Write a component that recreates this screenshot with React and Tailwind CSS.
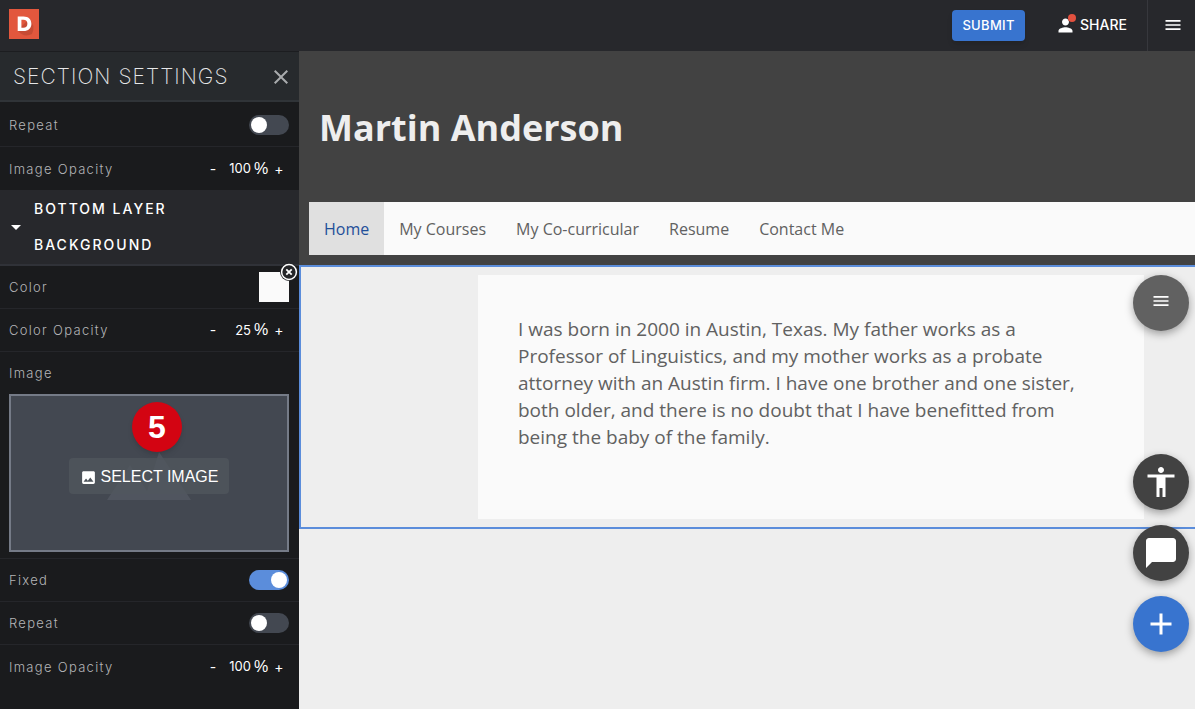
import React from "react";
import {
  MdAccessibility,
  MdAdd,
  MdArrowDropDown,
  MdChatBubble,
  MdClose,
  MdImage,
  MdMenu,
  MdPerson,
} from "react-icons/md";

function TopBar() {
  return (
    <header className="flex h-[51px] items-center bg-[#27282c] text-white">
      <a
        href="#home"
        aria-label="Dashboard"
        className="ml-[9px] mt-[9px] h-[30px] w-[30px] self-start bg-[#e2573d]"
      >
        <svg viewBox="0 0 30 30" className="h-full w-full" aria-hidden="true">
          <path d="M9 21 L20 10 Q27 16 23 25 Q15 29 9 22Z" fill="#b9452f" opacity=".65" />
          <path
            fillRule="evenodd"
            fill="#fff"
            d="M8.700 7.500h5.800c4.900 0 7.900 2.800 7.900 7.200s-3 7.300-7.900 7.300H8.700zM12.400 10.800v7.900h2c2.500 0 4-1.500 4-4s-1.500-3.900-4-3.900z"
          />
        </svg>
      </a>
      <button className="ml-auto mr-[30px] h-[31px] w-[73px] rounded-sm bg-[#3874cf] text-[13px] font-medium tracking-wide shadow-md">
        SUBMIT
      </button>
      <button className="mr-5 flex items-center gap-1 pb-px text-sm font-medium">
        <span className="relative">
          <MdPerson size={21} aria-hidden="true" />
          <span className="absolute -top-px right-0 h-2 w-2 rounded-full bg-[#e2513f]" />
        </span>
        SHARE
      </button>
      <button
        aria-label="Menu"
        className="flex h-full w-12 items-center justify-center border-l border-[#37383d] pb-px pl-[3px]"
      >
        <MdMenu size={20} />
      </button>
    </header>
  );
}

const rowStyle =
  "flex h-[43px] items-center justify-between border-b border-[#25262a] pl-[9px] pr-[10px]";
const labelStyle = "pt-[2px] text-[13px] font-light tracking-widest text-[#b4b5b7]";

function ToggleRow({ id, label, on }) {
  return (
    <div className={rowStyle}>
      <label htmlFor={id} className={labelStyle}>
        {label}
      </label>
      <input
        id={id}
        type="checkbox"
        role="switch"
        defaultChecked={on}
        className="h-5 w-10 appearance-none rounded-full bg-[#434851] p-[2px] before:block before:h-4 before:w-4 before:rounded-full before:bg-white checked:bg-[#5b8ddb] checked:before:translate-x-5"
      />
    </div>
  );
}

function OpacityRow({ id, label, value, last }) {
  return (
    <div className={last ? rowStyle + " border-b-0" : rowStyle}>
      <label htmlFor={id} className={labelStyle}>
        {label}
      </label>
      <div className="flex items-center pr-1 text-sm text-white">
        <button aria-label="Decrease" className="w-3 text-center">
          -
        </button>
        <input
          id={id}
          type="text"
          defaultValue={value}
          className="w-8 bg-transparent text-right text-[13px] outline-none"
        />
        <span className="ml-[2px] w-4 text-center font-['Liberation_Sans',sans-serif] text-base">
          %
        </span>
        <button aria-label="Increase" className="ml-1 w-3 text-center">
          +
        </button>
      </div>
    </div>
  );
}

function ImagePicker() {
  return (
    <div className="border-b border-[#25262a] pb-[6px] pl-[9px] pr-[10px]">
      <p className={"flex h-[42px] items-center " + labelStyle}>Image</p>
      <div className="relative flex h-[158px] items-center justify-center border-2 border-[#757b87] bg-[#434851]">
        <svg
          viewBox="0 0 84 48"
          aria-hidden="true"
          className="absolute left-24 top-14 h-12 w-[84px]"
        >
          <path d="M0 48 23 13 40 39 52 0 84 48Z" fill="#50555f" />
        </svg>
        <button className="relative mt-[6px] flex h-9 w-40 items-center justify-center gap-1 rounded-sm bg-[#50575d]/75 pt-[2px] font-['Liberation_Sans',sans-serif] text-base text-white">
          <MdImage size={17} aria-hidden="true" />
          SELECT IMAGE
        </button>
        <span className="absolute left-[121px] top-[6px] flex h-[50px] w-[50px] items-center justify-center rounded-full bg-[#d30412] font-['Liberation_Sans',sans-serif] text-[32px] font-bold text-white shadow-md">
          5
        </span>
      </div>
    </div>
  );
}

function SettingsPanel() {
  return (
    <aside className="w-[299px] shrink-0 border-t border-[#1c1d20] bg-[#1a1b1d]">
      <div className="mb-[2px] flex h-[50px] items-center justify-between border-b-2 border-[#303438] bg-[#272a2d] pl-[13px] pr-[6px] pt-px">
        <h2 className="text-[21px] font-extralight tracking-wider text-[#e6e7e8]">
          SECTION SETTINGS
        </h2>
        <button aria-label="Close" className="text-[#a9abad]">
          <MdClose size={24} />
        </button>
      </div>
      <ToggleRow id="top-repeat" label="Repeat" />
      <OpacityRow id="top-opacity" label="Image Opacity" value="100" last />
      <button className="flex h-[76px] w-full items-center border-b-2 border-[#303238] bg-[#27282c] pl-1 text-left text-sm font-medium leading-9 tracking-[2px] text-white">
        <MdArrowDropDown size={24} aria-hidden="true" />
        <span className="ml-[6px] w-36">BOTTOM LAYER BACKGROUND</span>
      </button>
      <div className={rowStyle}>
        <label htmlFor="layer-color" className={labelStyle}>
          Color
        </label>
        <div className="relative h-[30px] w-[30px]">
          <input
            id="layer-color"
            type="color"
            defaultValue="#fafafa"
            className="h-[30px] w-[30px] appearance-none bg-[#fafafa] p-0 [&::-webkit-color-swatch-wrapper]:p-0 [&::-webkit-color-swatch]:border-0"
          />
          <button
            aria-label="Clear color"
            className="absolute -right-[9px] -top-[9px] h-[18px] w-[18px]"
          >
            <svg viewBox="0 0 18 18" aria-hidden="true">
              <circle cx="9" cy="9" r="9" fill="#242528" />
              <circle cx="9" cy="9" r="7.400" fill="#242528" stroke="#fff" strokeWidth="1.500" />
              <path d="m6.300 6.300 5.400 5.400m0-5.400-5.400 5.400" stroke="#fff" strokeWidth="1.800" />
            </svg>
          </button>
        </div>
      </div>
      <OpacityRow id="color-opacity" label="Color Opacity" value="25" />
      <ImagePicker />
      <ToggleRow id="fixed" label="Fixed" on />
      <ToggleRow id="bottom-repeat" label="Repeat" />
      <OpacityRow id="bottom-opacity" label="Image Opacity" value="100" last />
    </aside>
  );
}

const links = ["My Courses", "My Co-curricular", "Resume", "Contact Me"];

function Preview() {
  return (
    <main className="min-w-0 flex-1 bg-[#eeeeee] font-['Open_Sans',sans-serif] text-[#616161]">
      <div className="bg-[#424242] pb-[10px] pl-[10px]">
        <h1 className="flex h-[151px] items-center pl-[10px] pt-[2px] text-4xl font-bold text-[#eeeeee]">
          Martin Anderson
        </h1>
        <nav className="flex h-[53px] items-stretch bg-[#fafafa] text-base">
          <a href="#home" className="flex items-center bg-[#e0e0e0] px-[15px] text-[#1f4f99]">
            Home
          </a>
          {links.map((text) => (
            <a key={text} href="#page" className="flex items-center px-[15px]">
              {text}
            </a>
          ))}
        </nav>
      </div>
      <section className="border-y-2 border-l-2 border-[#5b8ddb] pb-2 pl-[177px] pr-[51px] pt-2">
        <div className="min-h-[244px] bg-[#fafafa] px-10 pb-10 pt-[41px]">
          <p className="text-[19px] leading-[27px]">
            I was born in 2000 in Austin, Texas. My father works as a Professor of
            Linguistics, and my mother works as a probate attorney with an Austin
            firm. I have one brother and one sister, both older, and there is no
            doubt that I have benefitted from being the baby of the family.
          </p>
        </div>
      </section>
    </main>
  );
}

const roundButton =
  "flex h-14 w-14 items-center justify-center rounded-full text-white shadow-[0_3px_8px_rgba(0,0,0,0.35)]";

function FloatingButtons() {
  return (
    <>
      <button
        aria-label="Section menu"
        className={"fixed right-[6px] top-[275px] bg-[#616161] " + roundButton}
      >
        <MdMenu size={20} className="mb-1" />
      </button>
      <div className="fixed bottom-[57px] right-[6px] flex flex-col gap-[15px]">
        <button aria-label="Accessibility" className={"bg-[#424242] " + roundButton}>
          <MdAccessibility size={36} />
        </button>
        <button aria-label="Chat" className={"bg-[#424242] " + roundButton}>
          <MdChatBubble size={36} />
        </button>
        <button aria-label="Add" className={"bg-[#3874cf] " + roundButton}>
          <MdAdd size={36} />
        </button>
      </div>
    </>
  );
}

export default function App() {
  return (
    <div className="flex min-h-screen flex-col font-['Inter',sans-serif]">
      <TopBar />
      <div className="flex flex-1">
        <SettingsPanel />
        <Preview />
      </div>
      <FloatingButtons />
    </div>
  );
}
